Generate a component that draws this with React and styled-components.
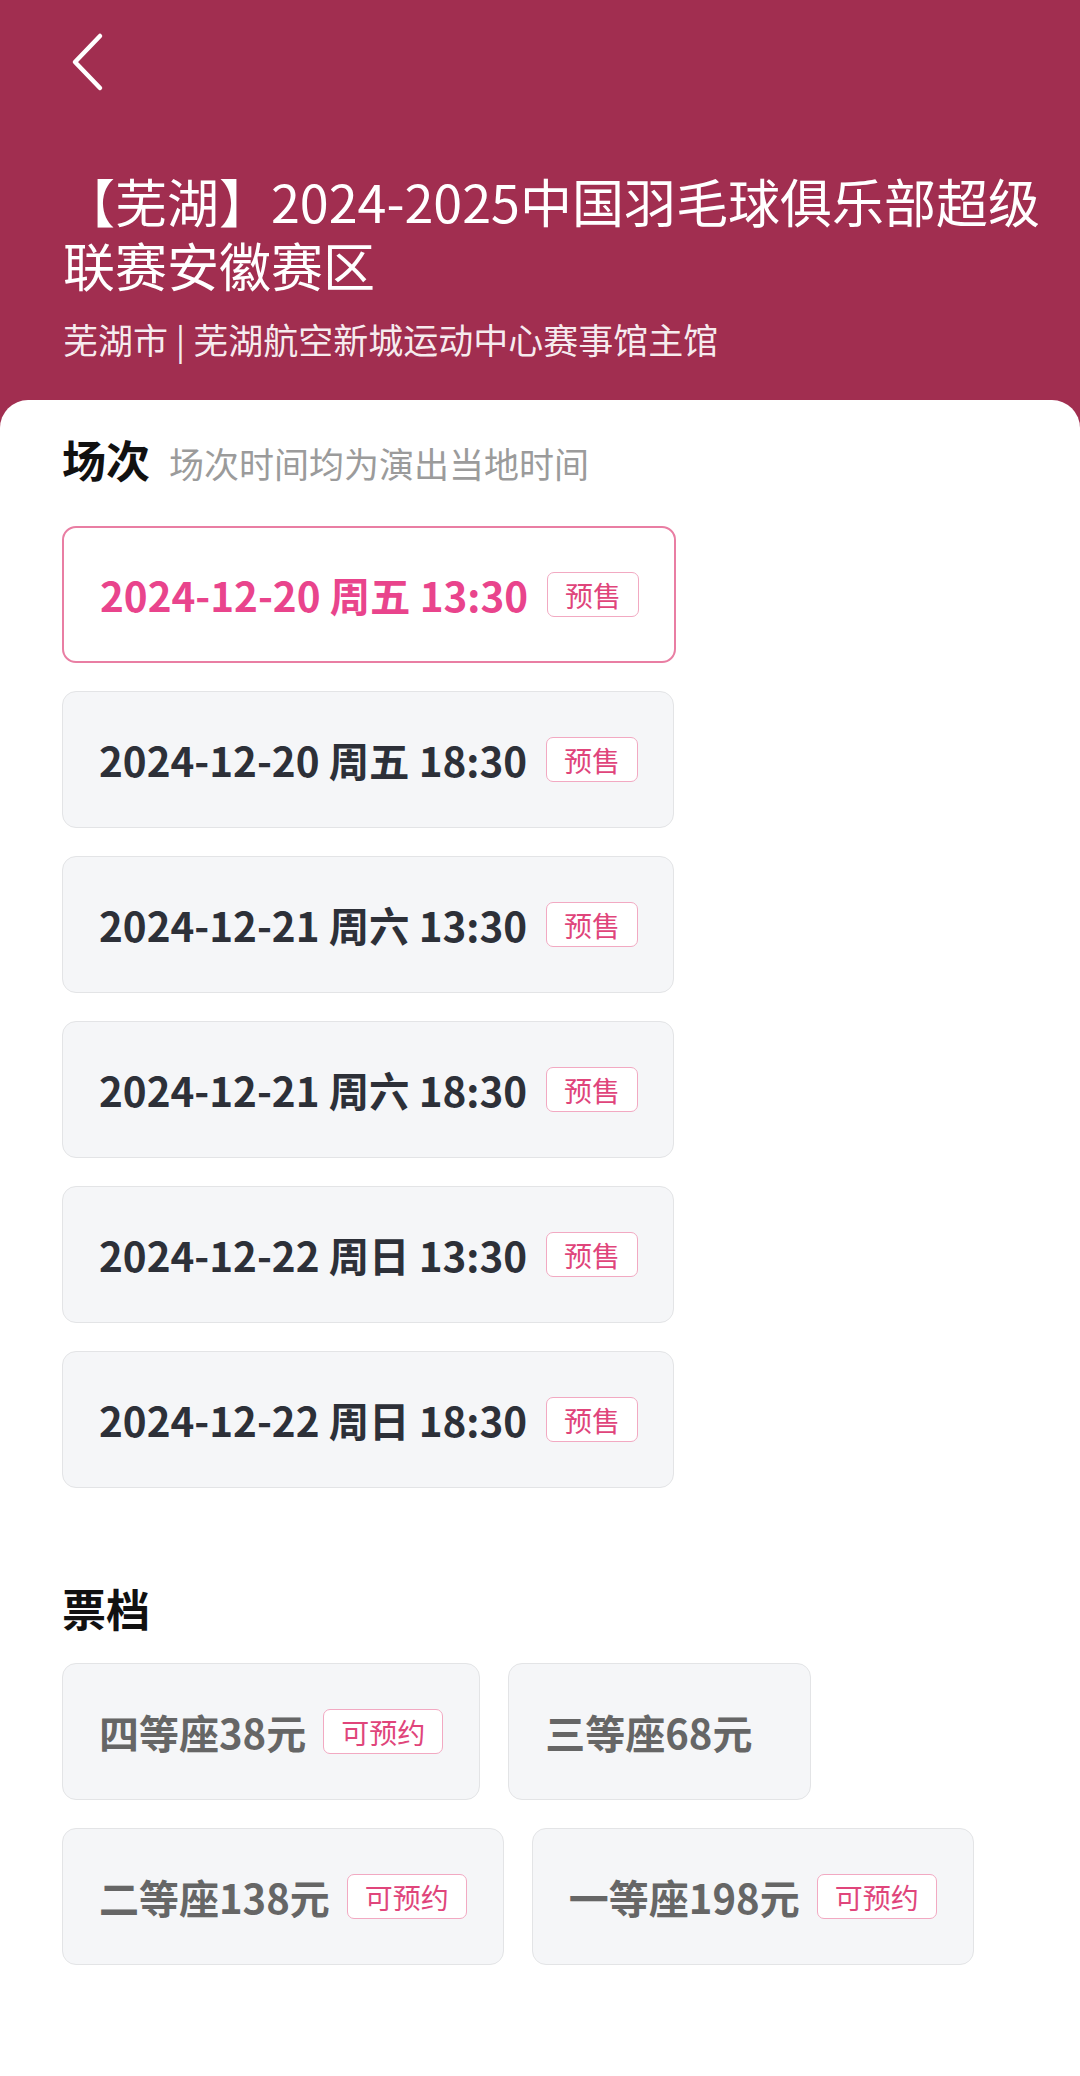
import React from "react";
import styled, { createGlobalStyle } from "styled-components";

const GlobalStyle = createGlobalStyle`
  html, body {
    margin: 0;
    padding: 0;
    background: #ffffff;
  }
  body {
    font-family: "Noto Sans CJK SC", "Noto Sans", sans-serif;
  }
  * {
    box-sizing: border-box;
  }
`;

const Page = styled.div`
  display: flex;
  flex-direction: column;
  min-height: 100vh;
  background: #a12e50;
`;

const Header = styled.header`
  padding: 32px 0 37px 63px;
  color: #ffffff;
`;

const BackButton = styled.button`
  display: block;
  background: transparent;
  border: 0;
  padding: 0;
  margin-left: 4px;
  width: 40px;
  height: 60px;
  cursor: pointer;

  svg {
    display: block;
  }
`;

const Title = styled.h1`
  margin: 77px 0 0 0;
  font-size: 52px;
  font-weight: 400;
  line-height: 64px;
  white-space: nowrap;
  color: #ffffff;
`;

const TitleLine = styled.span`
  display: block;
  height: 64px;
`;

const Venue = styled.p`
  margin: 18px 0 0 0;
  font-size: 35px;
  line-height: 48px;
  color: rgba(255, 255, 255, 0.92);
`;

const Panel = styled.main`
  flex-grow: 1;
  background: #ffffff;
  border-radius: 28px 28px 0 0;
  padding: 28px 62px 60px 62px;
`;

const SectionHead = styled.div`
  display: flex;
  align-items: baseline;
  height: 62px;
  margin-top: ${(props) => props.top || 0}px;
`;

const SectionTitle = styled.h2`
  margin: 0;
  font-size: 44px;
  font-weight: 700;
  line-height: 62px;
  color: #111111;
`;

const SectionNote = styled.span`
  margin-left: 19px;
  font-size: 35px;
  color: #9b9b9b;
`;

const SessionList = styled.div`
  display: flex;
  flex-direction: column;
  align-items: flex-start;
  gap: 28px;
  margin-top: 36px;
`;

const OptionCard = styled.div`
  display: inline-flex;
  align-items: center;
  height: 137px;
  padding: 0 ${(props) => props.padRight || 35}px 0 36px;
  border-radius: 14px;
  border: ${(props) =>
    props.active ? "2.5px solid #e97ea3" : "1.5px solid #e3e4e6"};
  background: ${(props) => (props.active ? "#ffffff" : "#f5f6f8")};
`;

const SessionText = styled.span`
  font-size: 40.4px;
  font-weight: 700;
  white-space: pre;
  color: ${(props) => (props.active ? "#e9448c" : "#2d3038")};
`;

const Tag = styled.span`
  display: inline-flex;
  align-items: center;
  justify-content: center;
  height: 45px;
  margin-left: ${(props) => props.gap || 17}px;
  padding: 0 17px;
  border: 1.5px solid #f2a9c2;
  border-radius: 7px;
  font-size: 28px;
  color: #e0457b;
  background: #ffffff;
`;

const TicketGrid = styled.div`
  display: flex;
  flex-wrap: wrap;
  gap: 28px;
  margin-top: 24px;
`;

const TicketText = styled.span`
  font-size: 40px;
  font-weight: 700;
  color: #666666;
`;

const sessions = [
  { text: "2024-12-20 周五 13:30", active: true },
  { text: "2024-12-20 周五 18:30" },
  { text: "2024-12-21 周六 13:30" },
  { text: "2024-12-21 周六 18:30" },
  { text: "2024-12-22 周日 13:30" },
  { text: "2024-12-22 周日 18:30" },
];

const tickets = [
  { name: "四等座38元", open: true },
  { name: "三等座68元", open: false },
  { name: "二等座138元", open: true },
  { name: "一等座198元", open: true },
];

const App = () => {
  return (
    <Page>
      <GlobalStyle />
      <Header>
        <BackButton aria-label="返回">
          <svg width="40" height="60" viewBox="0 0 40 60" fill="none">
            <path
              d="M33 4 L8 30 L33 56"
              stroke="#ffffff"
              strokeWidth="4.5"
              strokeLinecap="round"
              strokeLinejoin="round"
            />
          </svg>
        </BackButton>
        <Title>
          <TitleLine>【芜湖】2024-2025中国羽毛球俱乐部超级</TitleLine>
          <TitleLine>联赛安徽赛区</TitleLine>
        </Title>
        <Venue>芜湖市 | 芜湖航空新城运动中心赛事馆主馆</Venue>
      </Header>
      <Panel>
        <SectionHead>
          <SectionTitle>场次</SectionTitle>
          <SectionNote>场次时间均为演出当地时间</SectionNote>
        </SectionHead>
        <SessionList>
          {sessions.map((s) => (
            <OptionCard key={s.text} active={s.active}>
              <SessionText active={s.active}>{s.text}</SessionText>
              <Tag gap={19}>预售</Tag>
            </OptionCard>
          ))}
        </SessionList>

        <SectionHead top={89}>
          <SectionTitle>票档</SectionTitle>
        </SectionHead>
        <TicketGrid>
          {tickets.map((t) => (
            <OptionCard key={t.name} padRight={t.open ? 36 : 58}>
              <TicketText>{t.name}</TicketText>
              {t.open && <Tag>可预约</Tag>}
            </OptionCard>
          ))}
        </TicketGrid>
      </Panel>
    </Page>
  );
};

export default App;
